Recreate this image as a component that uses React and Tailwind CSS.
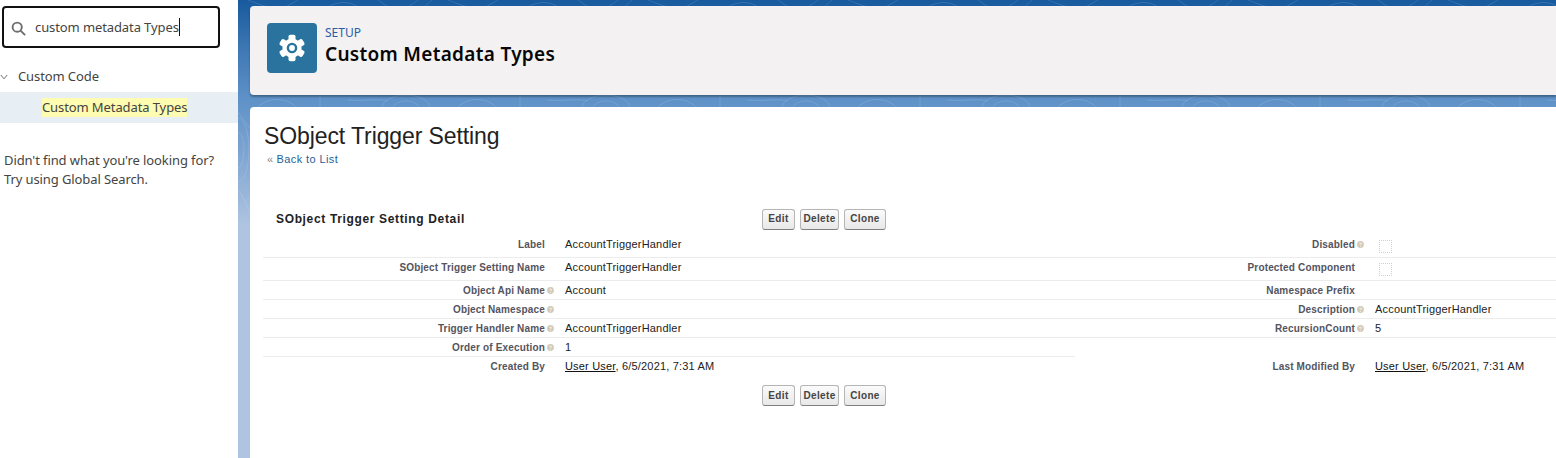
import React from "react";

const Help = () => (
  <svg width="7" height="7" viewBox="0 0 8 8" className="ml-[2px] shrink-0">
    <circle cx="4" cy="4" r="3.9" fill="#d3cbb8" />
    <path d="M2.8 3.1C2.9 2.2 5.2 2.1 5.2 3.2C5.2 4 4 3.9 4 4.8" fill="none" stroke="#fff" strokeWidth="0.9" />
    <circle cx="4" cy="6" r="0.55" fill="#fff" />
  </svg>
);

const Btns = () => (
  <div className="flex gap-[5px]">
    {[["Edit", "w-[33px]"], ["Delete", "w-[39px]"], ["Clone", "w-[42px]"]].map(([t, w]) => (
      <button key={t} className={`${w} h-[21px] rounded-[3px] border border-[#b5b5b5] border-b-[#7f7f7f] bg-gradient-to-b from-[#fbfbfb] to-[#e8e8e8] text-[10px] font-bold text-[#444] leading-none tracking-[0.35px]`}>
        {t}
      </button>
    ))}
  </div>
);

const Label = ({ text, help }) => (
  <div className="flex items-center justify-end">
    <span>{text}</span>
    {help ? <Help /> : <span className="w-[9px]" />}
  </div>
);

const Check = () => <span className="ml-[4px] mt-[5px] block h-[13px] w-[13px] border border-dotted border-[#cfcfcf]" />;

const rows = [
  { h: "h-[25px] pb-[2px]", l: "Label", v: "AccountTriggerHandler", r: "Disabled", rh: true, rv: <Check /> },
  { h: "h-[23px] pb-[4px]", l: "SObject Trigger Setting Name", v: "AccountTriggerHandler", r: "Protected Component", rv: <Check /> },
  { h: "h-[19px]", l: "Object Api Name", lh: true, v: "Account", r: "Namespace Prefix", rv: "" },
  { h: "h-[19px]", l: "Object Namespace", lh: true, v: "", r: "Description", rh: true, rv: "AccountTriggerHandler" },
  { h: "h-[19px]", l: "Trigger Handler Name", lh: true, v: "AccountTriggerHandler", r: "RecursionCount", rh: true, rv: "5" },
  { h: "h-[19px]", l: "Order of Execution", lh: true, v: "1", r: "", rv: "", noRight: true },
];

const By = () => (
  <span>
    <span className="underline text-[#111]">User User</span>, 6/5/2021, 7:31 AM
  </span>
);

const labelLeft = "w-[291px] shrink-0 text-[10px] font-bold tracking-[0.16px] text-[#54545e]";
const labelRight = "w-[289px] shrink-0 text-[10px] font-bold tracking-[0.16px] text-[#54545e]";
const valueCell = "pl-[11px] tracking-[0.18px] text-[#222]";

const repeats = [0, 200, 400, 600, 800, 1000, 1200];

export default function App() {
  return (
    <div className="flex h-[458px] w-[1556px] overflow-hidden bg-white font-['Liberation_Sans',sans-serif]">
      <aside className="w-[238px] shrink-0 bg-white font-['Noto_Sans',sans-serif] text-[13px] tracking-[-0.1px] text-[#444442]">
        <div className="ml-[2px] mt-[6px] flex h-[42px] w-[218px] items-center rounded-[4px] border-2 border-[#111] pl-[7px]">
          <svg width="15" height="15" viewBox="0 0 15 15" fill="none" stroke="#706e6b" strokeWidth="1.9" className="mt-[2px] shrink-0">
            <circle cx="6.2" cy="6.2" r="4.6" />
            <path d="M9.8 9.8L13.6 13.6" strokeLinecap="round" />
          </svg>
          <span className="ml-[9px] border-r border-[#111] leading-[18px]">custom metadata Types</span>
        </div>
        <div className="mt-[20px] flex h-[18px] items-center">
          <svg width="8" height="6" viewBox="0 0 8 6" fill="none" stroke="#706e6b" strokeWidth="1" className="ml-[0px]">
            <path d="M0.8 1L4 4.8L7.2 1" />
          </svg>
          <span className="ml-[10px]">Custom Code</span>
        </div>
        <div className="mt-[6px] flex h-[31px] items-center bg-[#e8eff4] pl-[42px]">
          <span className="bg-[#fdfcb0]">Custom Metadata Types</span>
        </div>
        <p className="mt-[28px] pl-[4px] leading-[19px]">
          Didn't find what you're looking for?
          <br />
          Try using Global Search.
        </p>
      </aside>

      <main className="relative min-w-0 flex-1 overflow-hidden bg-[linear-gradient(180deg,#175a9e_0px,#3f78b4_50px,#5f92c8_100px,#7ba3d0_150px,#aec4e0_225px,#aec4e0_458px)] pl-[12px] pt-[6px]">
        <svg className="absolute inset-0 h-full w-full" viewBox="0 0 1318 458" fill="none" stroke="#ffffff" strokeOpacity="0.12" strokeWidth="1">
          {repeats.map((x) => (
            <g key={x} transform={`translate(${x} 0)`}>
              <path d="M10 0C18 3 22 5 30 7M60 0C55 3 52 4 48 7M90 7C100 1 112 1 120 7M140 0L150 7M170 7L180 0M186 7L194 0" />
              <path d="M20 107C30 97 48 97 58 107M82 96V107M110 100C124 102 136 98 150 101" />
              <ellipse cx="168" cy="108" rx="24" ry="13" />
              <ellipse cx="168" cy="108" rx="13" ry="7" />
            </g>
          ))}
          <ellipse cx="0" cy="150" rx="11" ry="32" />
          <ellipse cx="0" cy="150" rx="6" ry="18" />
          <path d="M0 112C5 120 9 124 12 128M0 190C5 196 8 204 12 212" />
        </svg>

        <header className="relative flex h-[89px] items-start rounded-l-[4px] bg-[#f3f1f1] pl-[17px] pt-[17px] shadow-[0_2px_2px_rgba(0,0,0,0.3)]">
          <div className="flex h-[50px] w-[50px] items-center justify-center rounded-[4px] bg-[#2a739e]">
            <svg width="28" height="28" viewBox="0 0 28 28">
              <g fill="#fff">
                <circle cx="14" cy="14" r="9.6" />
                {[0, 60, 120, 180, 240, 300].map((a) => (
                  <rect key={a} x="10.5" y="0.8" width="7" height="6" rx="1.8" transform={`rotate(${a} 14 14)`} />
                ))}
              </g>
              <circle cx="14" cy="14" r="4.1" fill="none" stroke="#2a739e" strokeWidth="2.4" />
            </svg>
          </div>
          <div className="ml-[8px] mt-[1px]">
            <div className="font-['Noto_Sans',sans-serif] text-[12px] leading-[18px] text-[#2a5da8]">SETUP</div>
            <h1 className="font-['Noto_Sans',sans-serif] text-[19px] font-semibold leading-[25px] tracking-[0.3px] text-[#080707]">Custom Metadata Types</h1>
          </div>
        </header>

        <section className="relative mt-[12px] h-[351px] rounded-tl-[4px] bg-white pl-[13px] pt-[15px]">
          <h2 className="ml-[1px] h-[28px] text-[23px] leading-[28px] tracking-[-0.1px] text-[#222]">SObject Trigger Setting</h2>
          <div className="ml-[4px] mt-[2px] flex h-[14px] items-center text-[11px] tracking-[0.4px] text-[#1f5f96]">
            <span className="mr-[3px] text-[#888]">«</span>Back to List
          </div>

          <div className="mt-[42px] flex h-[22px] items-center">
            <div className="w-[499px] pl-[13px] text-[12px] font-bold tracking-[0.65px] text-[#222]">SObject Trigger Setting Detail</div>
            <Btns />
          </div>

          <div className="mt-[3px] text-[11px] text-[#333]">
            {rows.map((r) => (
              <div key={r.l} className="flex">
                <div className={`flex w-[812px] shrink-0 items-center border-b border-[#ececec] ${r.h}`}>
                  <div className={labelLeft}>
                    <Label text={r.l} help={r.lh} />
                  </div>
                  <div className={valueCell}>{r.v}</div>
                </div>
                <div className={`flex min-w-0 flex-1 items-center ${r.h} ${r.noRight ? "" : "border-b border-[#ececec]"}`}>
                  <div className={labelRight}>
                    {r.r && <Label text={r.r} help={r.rh} />}
                  </div>
                  <div className={valueCell}>{r.rv}</div>
                </div>
              </div>
            ))}
            <div className="flex h-[19px] items-center">
              <div className="flex w-[812px] shrink-0 items-center">
                <div className={labelLeft}>
                  <Label text="Created By" />
                </div>
                <div className={valueCell}><By /></div>
              </div>
              <div className="flex min-w-0 flex-1 items-center">
                <div className={labelRight}>
                  <Label text="Last Modified By" />
                </div>
                <div className={valueCell}><By /></div>
              </div>
            </div>
          </div>

          <div className="mt-[9px] pl-[499px]">
            <Btns />
          </div>
        </section>
      </main>
    </div>
  );
}
